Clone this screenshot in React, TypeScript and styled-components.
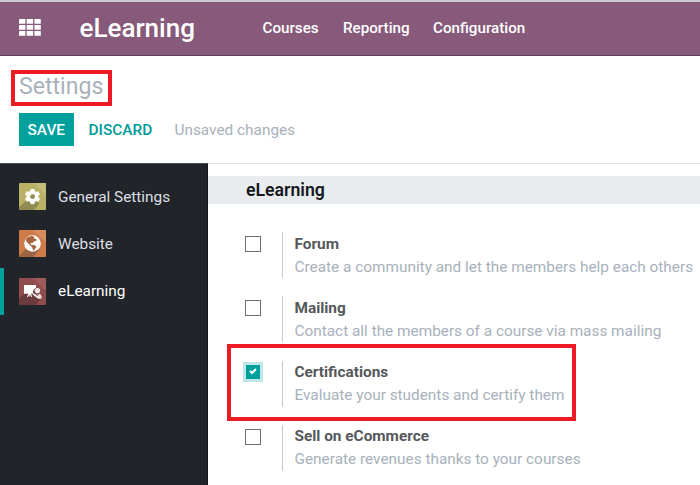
import React from 'react';
import styled, { createGlobalStyle } from 'styled-components';
import { FaCog } from 'react-icons/fa';

const GlobalStyle = createGlobalStyle`
  * { box-sizing: border-box; }
  html, body { margin: 0; height: 100%; overflow: hidden; background: #fff; }
  body { font-family: Roboto, "Liberation Sans", sans-serif; font-size: 15.37px; }
`;

const Page = styled.div`
  width: 700px;
  height: 485px;
  display: flex;
  flex-direction: column;
  overflow: hidden;
`;

const Navbar = styled.header`
  height: 56px;
  flex: none;
  display: flex;
  align-items: center;
  background: #875a7b;
  border-top: 2px solid #c9c9d1;
  border-bottom: 1px solid #5f3e57;
  color: #fff;
  padding: 0 0 2px 19px;
`;

const Brand = styled.div`
  width: 183px;
  margin-left: 38.5px;
  padding-top: 2px;
  font-size: 26px;
  line-height: 49px;
  font-weight: 500;
`;

const Menu = styled.nav`
  display: flex;
  gap: 24px;
  padding-top: 2px;
  font-size: 15.2px;
  font-weight: 500;
  line-height: 49px;
`;

const MenuItem = styled.a<{ $w: number }>`
  width: ${p => p.$w}px;
  white-space: nowrap;
`;

const ControlPanel = styled.section`
  height: 107px;
  flex: none;
  padding: 14px 0 0 11px;
`;

const Title = styled.h1`
  width: 101px;
  height: 36px;
  margin: 0;
  padding-left: 4px;
  border: 4px solid #ed1c24;
  color: #a8b1bb;
  font-size: 23.1px;
  line-height: 25px;
  font-weight: 400;
`;

const Actions = styled.div`
  display: flex;
  align-items: center;
  margin: 7px 0 0 8px;
  height: 33px;
`;

const Button = styled.button<{ $primary?: boolean }>`
  height: 33px;
  width: ${p => (p.$primary ? 54.5 : 86)}px;
  padding: 0;
  border: 0;
  background: ${p => (p.$primary ? '#00a09d' : 'transparent')};
  color: ${p => (p.$primary ? '#fff' : '#009a97')};
  font: 500 15.4px/34px Roboto, sans-serif;
  text-align: ${p => (p.$primary ? 'center' : 'left')};
  margin-right: ${p => (p.$primary ? 15 : 0)}px;
`;

const Status = styled.span`
  color: #a8b1bb;
  line-height: 34px;
`;

const Body = styled.div`
  flex: 1;
  display: flex;
  min-height: 0;
`;

const Sidebar = styled.aside`
  width: 208px;
  flex: none;
  padding-top: 9px;
  background: #212529;
  border-top: 1px solid #484b50;
  border-right: 1px solid #16191c;
`;

const Tab = styled.div<{ $active?: boolean }>`
  height: 47.3px;
  display: flex;
  align-items: center;
  gap: 12px;
  padding-left: 15px;
  border-left: 4px solid ${p => (p.$active ? '#00a09d' : 'transparent')};
  color: ${p => (p.$active ? '#fff' : '#dcdfe3')};
  white-space: nowrap;
`;

const Tile = styled.svg`
  width: 27px;
  height: 27px;
  flex: none;
`;

const Content = styled.main`
  flex: 1;
  min-width: 0;
  padding-top: 12px;
  border-top: 1px solid #dfe1e4;
`;

const SectionTitle = styled.h2`
  height: 28px;
  margin: 0 0 28px;
  padding-left: 38px;
  background: #e9ecef;
  color: #15191d;
  font-size: 17.7px;
  line-height: 28px;
  font-weight: 600;
`;

const Setting = styled.div`
  position: relative;
  height: 64.3px;
  display: flex;
  align-items: flex-start;
  padding: 3px 0 0 37px;
`;

const Check = styled.span<{ $on?: boolean }>`
  width: 16px;
  height: 16px;
  flex: none;
  display: flex;
  align-items: center;
  justify-content: center;
  margin-top: 1px;
  border: 1.5px solid ${p => (p.$on ? '#00a09d' : '#6c7177')};
  background: ${p => (p.$on ? '#00a09d' : '#fff')};
  ${p => p.$on && 'width: 14px; height: 14px; margin: 1px 1px 0; box-shadow: 0 0 0 3px #bfe7e7;'}
`;

const Detail = styled.div`
  height: 46px;
  margin: -3px 0 0 21px;
  padding: 0.6px 0 0 11.5px;
  border-left: 1px solid #c6c8cb;
  white-space: nowrap;
`;

const Label = styled.div`
  color: #55585b;
  font-weight: 700;
  line-height: 23px;
`;

const Help = styled.div`
  color: #a8b1bb;
  line-height: 22px;
`;

const Highlight = styled.div`
  position: absolute;
  left: 19px;
  top: -17px;
  width: 349px;
  height: 77.5px;
  border: 4px solid #ed1c24;
`;

const AppsIcon = () => (
  <svg width="22" height="17" viewBox="0 0 22 17" fill="#fff">
    {[0, 6, 12].map(y =>
      [0, 7.7, 15.4].map(x => <rect key={`${x}-${y}`} x={x} y={y} width="6.4" height="4.8" rx="0.4" />)
    )}
  </svg>
);

const GeneralIcon = () => (
  <Tile viewBox="0 0 27 27">
    <rect width="27" height="27" rx="1" fill="#b9b165" />
    <path d="M0 0H15L27 12V0Z" fill="#c4bd7a" />
    <path d="M8 17L0 24V27H15L20 21L17 8Z" fill="#918a52" />
    <FaCog x="5.5" y="5.5" size={16} color="#fff" />
  </Tile>
);

const WebsiteIcon = () => (
  <Tile viewBox="0 0 27 27">
    <rect width="27" height="27" rx="1" fill="#ce7b4a" />
    <path d="M0 0H13L27 12V0Z" fill="#d78c5e" />
    <path d="M7 19L0 26V27H14L21 19Z" fill="#9d6443" />
    <circle cx="13.5" cy="13.5" r="8.3" fill="#fff" />
    <path d="M7 8.8L9.5 6.7L13 6L15.6 7L14.6 8.6L17 8.8L17.6 10.5L15 11.6L13.2 13.2L11 13L12.6 15L14.5 14.8L17.6 16.6L15.2 20.3L14 20.6L13.3 17.4L10.8 15L8.2 12.6L7 10.6Z" fill="#a96540" />
  </Tile>
);

const LearningIcon = () => (
  <Tile viewBox="0 0 27 27">
    <rect width="27" height="27" rx="1" fill="#914c4e" />
    <path d="M0 0H13L27 13V0Z" fill="#9d595b" />
    <path d="M5 16L0 21V27H17L22 20L17 8Z" fill="#6b3b3d" />
    <path d="M5 7H17V10A4 4 0 0 0 14.5 15.8H12L13.3 19H12.4L11.2 16.5V18.5H10.4V16.5L9 19H8L9.4 15.8H5Z" fill="#fff" />
    <circle cx="18.4" cy="12.6" r="2.7" fill="#f4ecec" />
    <path d="M13.8 15.2L16.2 16L18.6 18L20.2 15.7Q22.4 16.5 22.4 18.5V20.8H19L13.8 16.8Z" fill="#f0e5e5" />
    <path d="M17.2 15.6L18.5 17.6L19.6 15.6Z" fill="#b68c8d" />
  </Tile>
);

const tabs = [
  { name: 'General Settings', Icon: GeneralIcon },
  { name: 'Website', Icon: WebsiteIcon },
  { name: 'eLearning', Icon: LearningIcon, active: true },
];

const settings = [
  { label: 'Forum', help: 'Create a community and let the members help each others' },
  { label: 'Mailing', help: 'Contact all the members of a course via mass mailing' },
  { label: 'Certifications', help: 'Evaluate your students and certify them', on: true },
  { label: 'Sell on eCommerce', help: 'Generate revenues thanks to your courses' },
];

export default function App() {
  return (
    <Page>
      <GlobalStyle />
      <Navbar>
        <AppsIcon />
        <Brand>eLearning</Brand>
        <Menu>
          <MenuItem $w={56.5}>Courses</MenuItem>
          <MenuItem $w={66}>Reporting</MenuItem>
          <MenuItem $w={93}>Configuration</MenuItem>
        </Menu>
      </Navbar>
      <ControlPanel>
        <Title>Settings</Title>
        <Actions>
          <Button $primary>SAVE</Button>
          <Button>DISCARD</Button>
          <Status>Unsaved changes</Status>
        </Actions>
      </ControlPanel>
      <Body>
        <Sidebar>
          {tabs.map(({ name, Icon, active }) => (
            <Tab key={name} $active={active}>
              <Icon />
              {name}
            </Tab>
          ))}
        </Sidebar>
        <Content>
          <SectionTitle>eLearning</SectionTitle>
          {settings.map(s => (
            <Setting key={s.label}>
              <Check $on={s.on}>
                {s.on && (
                  <svg width="8" height="7" viewBox="0 0 8 7" fill="none" stroke="#fff" strokeWidth="2">
                    <path d="M1 3L3 5L7 1" />
                  </svg>
                )}
              </Check>
              <Detail>
                <Label>{s.label}</Label>
                <Help>{s.help}</Help>
              </Detail>
              {s.on && <Highlight />}
            </Setting>
          ))}
        </Content>
      </Body>
    </Page>
  );
}
